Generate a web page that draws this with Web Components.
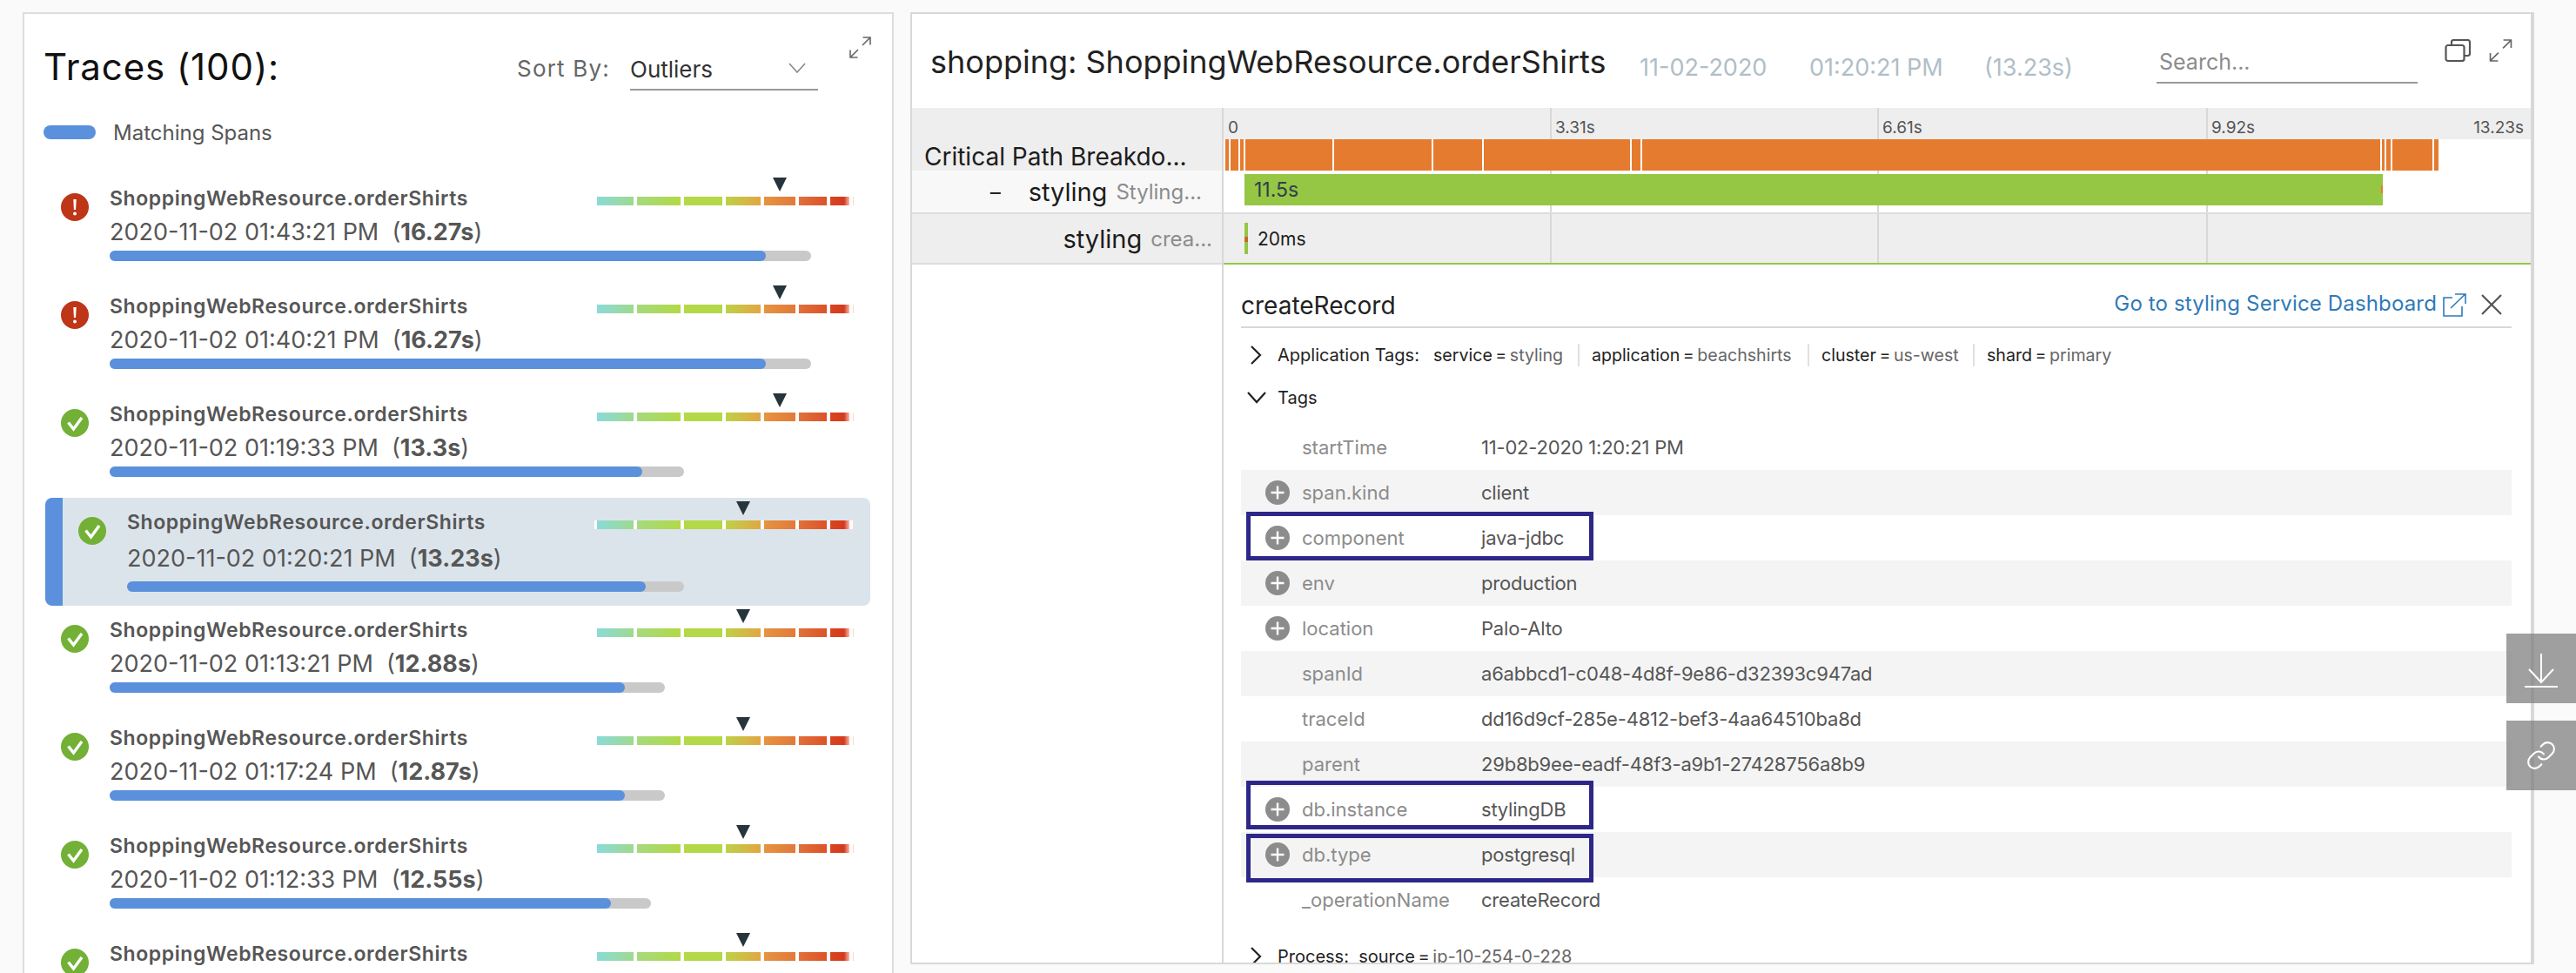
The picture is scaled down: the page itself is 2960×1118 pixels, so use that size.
<!doctype html>
<html lang="en"><head><meta charset="utf-8"><title>Traces</title>
<style>
html,body{margin:0;height:1118px;overflow:hidden;background:#fafafa;font-family:Inter,"Liberation Sans",sans-serif}
</style></head>
<body>
<trace-app>
  <trace-panel count="100" slot="left">
    <trace-row status="error" date="2020-11-02 01:43:21 PM" dur="16.27s" total="806" fill="754" tri="205"></trace-row>
    <trace-row status="error" date="2020-11-02 01:40:21 PM" dur="16.27s" total="806" fill="754" tri="205"></trace-row>
    <trace-row status="ok" date="2020-11-02 01:19:33 PM" dur="13.3s" total="660" fill="612" tri="205"></trace-row>
    <trace-row status="ok" selected date="2020-11-02 01:20:21 PM" dur="13.23s" total="640" fill="596" tri="163"></trace-row>
    <trace-row status="ok" date="2020-11-02 01:13:21 PM" dur="12.88s" total="638" fill="592" tri="163"></trace-row>
    <trace-row status="ok" date="2020-11-02 01:17:24 PM" dur="12.87s" total="638" fill="592" tri="163"></trace-row>
    <trace-row status="ok" date="2020-11-02 01:12:33 PM" dur="12.55s" total="622" fill="576" tri="163"></trace-row>
    <trace-row status="ok" tri="163"></trace-row>
  </trace-panel>
  <detail-panel slot="right">
    <time-line slot="timeline"></time-line>
    <span-info slot="info">
      <tag-row k="startTime" v="11-02-2020 1:20:21 PM"></tag-row>
      <tag-row alt plus k="span.kind" v="client"></tag-row>
      <tag-row plus hl="-4" k="component" v="java-jdbc"></tag-row>
      <tag-row alt plus k="env" v="production"></tag-row>
      <tag-row plus k="location" v="Palo-Alto"></tag-row>
      <tag-row alt k="spanId" v="a6abbcd1-c048-4d8f-9e86-d32393c947ad"></tag-row>
      <tag-row k="traceId" v="dd16d9cf-285e-4812-bef3-4aa64510ba8d"></tag-row>
      <tag-row alt k="parent" v="29b8b9ee-eadf-48f3-a9b1-27428756a8b9"></tag-row>
      <tag-row plus hl="-7" k="db.instance" v="stylingDB"></tag-row>
      <tag-row alt plus hl="2" k="db.type" v="postgresql"></tag-row>
      <tag-row k="_operationName" v="createRecord"></tag-row>
    </span-info>
  </detail-panel>
  <float-buttons></float-buttons>
</trace-app>
<script>
const EXPAND='<svg width="25" height="25" viewBox="0 0 25 25" fill="none" stroke="#666" stroke-width="1.6"><path d="M15 10L24 1M15.5 1H24V9.5M10 15L1 24M1 15.5V24H9.5"/></svg>';
function def(name,css,render){
  customElements.define(name,class extends HTMLElement{
    connectedCallback(){
      if(this.shadowRoot)return;
      const s=this.attachShadow({mode:'open'});
      s.innerHTML='<style>'+css+'</style>'+render(this);
    }
  });
}
def('trace-app',`
:host{display:flex;align-items:flex-start;gap:19px;padding:14px 48px 0 26px;box-sizing:border-box;width:2960px;height:1118px}
`,()=>'<slot name="left"></slot><slot name="right"></slot><slot></slot>');

def('trace-panel',`
:host{display:block;flex:none;width:1001px;height:1104px;box-sizing:border-box;background:#fff;border:2px solid #ddd;border-bottom:0;overflow:hidden}
.head{display:flex;align-items:flex-start;height:128px;padding-left:22px;box-sizing:border-box}
h1{margin:36px 0 0;flex:none;width:544px;font:400 42px/50px Inter,sans-serif;letter-spacing:.9px;color:#111}
.sb{flex:none;width:130px;margin-top:48px;font-size:26px;line-height:30px;letter-spacing:1.2px;color:#666}
.sel{flex:none;width:216px;height:44px;margin-top:44px;box-sizing:border-box;border-bottom:2px solid #999;display:flex;justify-content:space-between;padding:5px 14px 0 0;font-size:26px;line-height:30px;color:#333}
.sel svg{margin-top:7px}
.ex{flex:none;margin:26px 0 0 36px;height:25px}
.leg{display:flex;align-items:center;gap:20px;height:16px;margin:0 0 40px 22px;font-size:24px;color:#565656}
.leg i{width:60px;height:16px;border-radius:8px;background:#5a90dc}
.list{display:block}
`,h=>`<div class="head"><h1>Traces (${h.getAttribute('count')}):</h1><div class="sb">Sort By:</div>
<div class="sel"><span>Outliers</span><svg width="20" height="12" viewBox="0 0 20 12" fill="none" stroke="#888" stroke-width="1.6"><path d="M1 1l9 10 9-10"/></svg></div>
<div class="ex">${EXPAND}</div></div>
<div class="leg"><i></i><span>Matching Spans</span></div>
<div class="list"><slot></slot></div>`);

const HEAT=[[42,'#8adbd8','#9fd98f'],[50,'#a5da7e','#b2d946'],[44,'#b3d948','#b3d948'],[40,'#bdd246','#e2a644'],[36,'#e69440','#e2793a'],[32,'#e0713a','#dd5228'],[22,'#d9451f','#d53a1e']];
def('trace-row',`
:host{display:flex;box-sizing:border-box;height:124px;width:948px;margin-left:24px;padding:0 19px 0 18px;color:#565656;border-radius:8px}
:host([selected]){background:#dce4eb;border-left:20px solid #5a90dc}
.ic{flex:none;width:32px;height:32px;margin:22px 24px 0 0}
.main{flex:1;min-width:0}
.top{display:flex;justify-content:space-between;height:50px}
.name{margin-top:12px;font-weight:600;font-size:23px;line-height:32px;letter-spacing:.6px;height:32px;white-space:nowrap}
.heat{position:relative;flex:none;display:flex;width:298px;height:10px;margin-top:26px;padding-left:3px;box-sizing:border-box;background:#fff}
.heat b{display:block;height:10px;margin-right:4px;flex:none}
.heat u{display:block;width:1px;height:10px;background:#fdd8d0;flex:none}
.tri{position:absolute;top:-22px;width:0;height:0;border:8px solid transparent;border-top:16px solid #26343b;border-bottom:0}
.date{font-size:27px;line-height:34px;white-space:pre;height:34px}
.date b{font-weight:700}
:host([selected]) .date{margin-top:3px}
.bar{width:var(--t);height:12px;border-radius:6px;background:#c9c9c9;margin-top:4px}
:host([selected]) .bar{margin-top:9px}
.bar i{display:block;width:var(--f);height:12px;border-radius:6px;background:#5a90dc}
`,h=>{
 const a=n=>h.getAttribute(n);
 const ic=a('status')==='error'
  ?'<svg class="ic" viewBox="0 0 32 32"><circle cx="16" cy="16" r="16" fill="#bf3518"/><path d="M14.3 7h3.4l-.6 12h-2.2z" fill="#fff"/><circle cx="16" cy="23.5" r="2" fill="#fff"/></svg>'
  :'<svg class="ic" viewBox="0 0 32 32"><circle cx="16" cy="16" r="16" fill="#72b036"/><path d="M8.5 15.5l6 7.5L24 10" fill="none" stroke="#fff" stroke-width="3.4"/></svg>';
 const heat=HEAT.map(([w,c1,c2],i)=>`<b style="width:${w}px;background:linear-gradient(90deg,${c1},${c2}${i==6?' 72%,#f6b8a8':''})"></b>`).join('');
 return `${ic}<div class="main"><div class="top"><div class="name">ShoppingWebResource.orderShirts</div>
 <div class="heat">${heat}<u></u><span class="tri" style="left:${a('tri')}px"></span></div></div>
 ${a('date')?`<div class="date">${a('date')}  (<b>${a('dur')}</b>)</div><div class="bar" style="--t:${a('total')}px;--f:${a('fill')}px"><i></i></div>`:''}</div>`;
});

def('detail-panel',`
:host{display:flex;flex-direction:column;flex:none;width:1866px;height:1094px;box-sizing:border-box;background:#fff;border:2px solid #d8d8d8;border-right-width:4px;overflow:hidden;color:#222}
.head{flex:none;display:flex;align-items:flex-start;height:108px;padding:0 21px;box-sizing:border-box}
h2{margin:33px 0 0;font:400 36px/44px Inter,sans-serif;white-space:nowrap;color:#222;flex:none;width:775px}
.m{flex:none;margin-top:45px;font-size:27px;line-height:34px;color:#b0bec7;white-space:nowrap}
.s{flex:none;width:300px;height:42px;margin:38px 0 0 auto;box-sizing:border-box;border-bottom:2px solid #999;padding:2px 0 0 3px;font-size:25px;line-height:30px;color:#8c8c8c}
.i1{flex:none;margin:29px 0 0 31px;height:26px}
.i2{flex:none;margin:29px 0 0 21px;height:26px}
.i2 svg{width:27px;height:26px}
.body{flex:1;display:flex;flex-direction:column;min-height:0}
`,()=>`<div class="head"><h2>shopping: ShoppingWebResource.orderShirts</h2>
<div class="m" style="margin-left:40px;width:195px">11-02-2020</div><div class="m" style="width:201px">01:20:21 PM</div><div class="m">(13.23s)</div>
<div class="s">Search...</div>
<div class="i1"><svg width="30" height="26" viewBox="0 0 30 26" fill="none" stroke="#555" stroke-width="2.2"><rect x="1.5" y="7" width="21" height="18" rx="2.5"/><path d="M8 7V3.5A2.5 2.5 0 0 1 10.5 1h16A2.5 2.5 0 0 1 29 3.5v13a2.5 2.5 0 0 1-2.5 2.5H23"/></svg></div>
<div class="i2">${EXPAND}</div></div>
<div class="body"><slot name="timeline"></slot><slot name="info"></slot></div>`);

const GAPS=[1412,1423,1429,1531,1645,1703,1873,1885,2735,2740,2747,2795];
def('time-line',`
:host{display:block;flex:none;--g:#d8d8d8;font-family:Inter,sans-serif}
.r{display:grid;grid-template-columns:356px 2px 1fr}
.v{background:#d8d8d8}
.lab{display:flex;align-items:center;justify-content:flex-end;white-space:nowrap;overflow:hidden}
.t{min-width:0;background-image:linear-gradient(var(--g),var(--g)),linear-gradient(var(--g),var(--g)),linear-gradient(var(--g),var(--g));background-size:2px 100%;background-repeat:no-repeat;background-position:375px 0,751px 0,1129px 0}
.a{height:36px;background-color:#eee;display:grid;grid-template-columns:375px 376px 378px 1fr auto;font-size:19px;line-height:46px;color:#555}
.a span{padding-left:6px;height:36px}.a span:first-child{padding-left:5px}.a span:last-child{padding:0 8px 0 0}
.o{display:flex;gap:2px;height:36px;margin-left:2px;width:1394px}
.o i{display:block;height:36px;background:#e57b2f;flex:none}
.crit{background:#eee;align-items:flex-end;justify-content:flex-start;padding-left:14px;font-size:28px;line-height:36px;color:#1c1c1c;height:72px;box-sizing:border-box}
.crit span{position:relative;top:2px}
.bB{border-bottom:2px solid #ddd}
.nm{font-size:29px;color:#1c1c1c}.gr{font-size:24px;color:#8c8c8c;margin-left:10px}
.gb{position:relative;margin:4px 0 0 24px;width:1308px;height:36px;background:#95c644;box-sizing:border-box;padding-left:11px;font-size:23px;line-height:36px;color:#2f4050}
.gb em{position:absolute;right:0;top:13px;width:2px;height:9px;background:#e57b2f}
.sm{display:flex;align-items:center;height:56px;margin-left:24px;font-size:21px;color:#1c1c1c}
.sm i{display:block;width:4px;height:36px;background:linear-gradient(#95c644 45%,#c9652f 45%,#c9652f 60%,#95c644 60%);margin-right:11px}
.end{height:2px;display:grid;grid-template-columns:358px 1fr;background:#ddd}.end i{background:#95c644}
`,()=>{
 let x=1408,seg='';
 for(const g of GAPS){seg+=`<i style="width:${g-x}px"></i>`;x=g+2;}
 seg+=`<i style="width:${2802-x}px"></i>`;
 return `<div class="r"><div class="lab crit"><span>Critical Path Breakdo...</span></div><div class="v"></div>
 <div class="t" style="background-color:#fff"><div class="a t"><span>0</span><span>3.31s</span><span>6.61s</span><span>9.92s</span><span>13.23s</span></div><div class="o">${seg}</div></div></div>
 <div class="r bB"><div class="lab" style="background:#f8f8f8;height:48px;padding-right:23px"><span style="font-size:24px;margin-right:28px;width:16px">–</span><span class="nm">styling</span><span class="gr">Styling...</span></div><div class="v"></div>
 <div class="t" style="height:48px"><div class="gb">11.5s<em></em></div></div></div>
 <div class="r"><div class="lab" style="background:#eee;height:56px;padding-right:11px"><span class="nm">styling</span><span class="gr">crea...</span></div><div class="v"></div>
 <div class="t" style="background-color:#eee"><div class="sm"><i></i>20ms</div></div></div>
 <div class="end"><span></span><i></i></div>`;
});

const CR='<svg width="16" height="22" viewBox="0 0 16 22" fill="none" stroke="#222" stroke-width="2.2"><path d="M3 1l10 10L3 21"/></svg>';
def('span-info',`
:host{display:block;flex:1;min-height:0;margin-left:356px;border-left:2px solid #d8d8d8;padding:0 22px 0 20px;overflow:hidden;color:#222}
.tt{display:flex;height:71px;padding-top:30px;box-sizing:border-box;border-bottom:0}
.tt h3{margin:0;font:400 28px/34px Inter,sans-serif;color:#222;flex:1}
.tt a{font-size:24px;line-height:30px;letter-spacing:.15px;color:#2f7ab8;white-space:nowrap}
.tt svg{flex:none}
hr{margin:0;border:0;height:2px;background:#d8d8d8}
.at{display:flex;align-items:center;height:62px;font-size:19.6px;white-space:nowrap}
.ch{flex:none;display:flex;width:42px;padding-left:9px;box-sizing:border-box}
.tg{flex:none;box-sizing:border-box;height:26px;line-height:26px;word-spacing:-2px}
.tg+.tg{border-left:2px solid #e0e0e0;padding-left:14px}
.tg s,.p s{text-decoration:none;color:#666}
.lbl{flex:none;width:179px;font-size:20px;white-space:nowrap}
.tags{display:flex;align-items:center;height:36px;font-size:20px}
.tb{display:block;margin-top:13px}
.p{display:flex;align-items:center;height:30px;margin-top:24px;font-size:20px;white-space:nowrap}
`,()=>`<div class="tt"><h3>createRecord</h3><a>Go to styling Service Dashboard</a>
<svg style="margin:3px 0 0 7px" width="27" height="27" viewBox="0 0 27 27" fill="none" stroke="#2f7ab8" stroke-width="1.6"><path d="M11 5H1v21h21V15M9 17L25.7 1M14 1h12v11"/></svg>
<svg style="margin:4px 11px 0 17px" width="24" height="24" viewBox="0 0 24 24" fill="none" stroke="#555" stroke-width="2.2"><path d="M1 1l22 22M23 1L1 23"/></svg></div>
<hr>
<div class="at"><span class="ch">${CR}</span><span class="lbl">Application Tags:</span>
<span class="tg" style="width:166px">service = <s>styling</s></span>
<span class="tg" style="width:264px">application = <s>beachshirts</s></span>
<span class="tg" style="width:190px">cluster = <s>us-west</s></span>
<span class="tg">shard = <s>primary</s></span></div>
<div class="tags"><span class="ch" style="padding-left:7px"><svg width="22" height="14" viewBox="0 0 22 14" fill="none" stroke="#222" stroke-width="2.2"><path d="M1 1l10 11L21 1"/></svg></span>Tags</div>
<div class="tb"><slot></slot></div>
<div class="p"><span class="ch">${CR}</span>Process:&nbsp;&nbsp;<span style="word-spacing:-2px">source = <s>ip-10-254-0-228</s></span></div>`);

def('tag-row',`
:host{display:flex;align-items:center;position:relative;height:52px;padding-left:28px;font-size:22px;background:#fff}
:host([alt]){background:#f4f4f4}
.pl{flex:none;width:28px;height:28px;margin-right:14px}
.k{flex:none;width:206px;color:#8c8c8c;white-space:nowrap}
.v{color:#565656;white-space:nowrap;letter-spacing:-.2px;position:relative;z-index:1}
.hl{position:absolute;left:6px;width:399px;height:56px;box-sizing:border-box;border:5px solid #2e2787;z-index:2}
`,h=>{
 const a=n=>h.getAttribute(n);
 const ic=h.hasAttribute('plus')
  ?'<svg class="pl" viewBox="0 0 28 28"><circle cx="14" cy="14" r="14" fill="#8c8c8c"/><path d="M14 6.5v15M6.5 14h15" stroke="#fff" stroke-width="2.4"/></svg>'
  :'<span class="pl"></span>';
 const hl=h.hasAttribute('hl')?`<div class="hl" style="top:${a('hl')}px"></div>`:'';
 if(hl)h.style.zIndex=3;
 return `${ic}<span class="k">${a('k')}</span><span class="v">${a('v')}</span>${hl}`;
});

def('float-buttons',`
:host{position:fixed;right:0;top:728px;display:flex;flex-direction:column;gap:20px;z-index:10}
div{width:80px;height:80px;background:rgba(128,128,128,.75);display:flex;align-items:center;justify-content:center}
`,()=>`<div><svg width="80" height="80" viewBox="0 0 80 80" fill="none" stroke="#fff" stroke-width="2"><path d="M40 23v33M26 41l14 15 14-15M21 61h38"/></svg></div>
<div><svg width="36" height="36" viewBox="0 0 24 24" fill="none" stroke="#fff" stroke-width="1.4" stroke-linecap="round"><path d="M10 13a5 5 0 0 0 7.54.54l3-3a5 5 0 0 0-7.07-7.07l-1.72 1.71"/><path d="M14 11a5 5 0 0 0-7.54-.54l-3 3a5 5 0 0 0 7.07 7.07l1.71-1.71"/></svg></div>`);
</script>
</body></html>
